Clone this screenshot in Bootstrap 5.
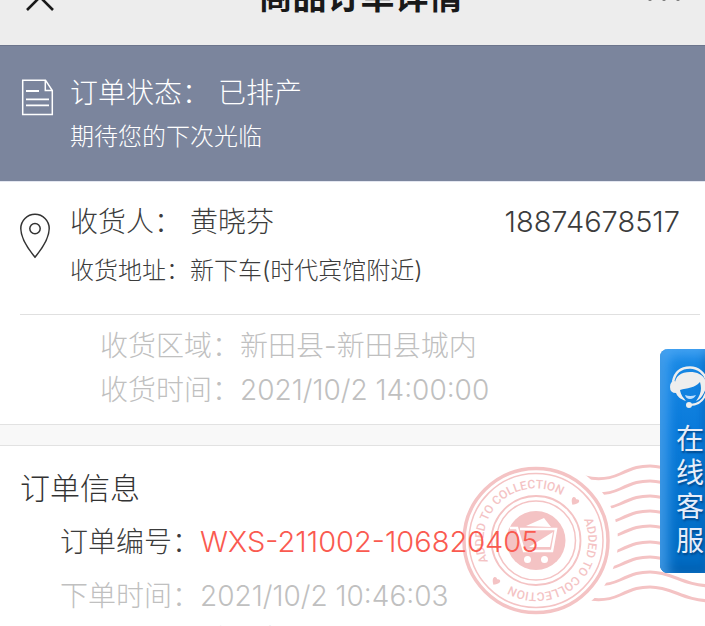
<!DOCTYPE html>
<html lang="zh-CN">
<head>
<meta charset="utf-8">
<meta name="viewport" content="width=device-width, initial-scale=1">
<title>商品订单详情</title>
<link href="https://cdn.jsdelivr.net/npm/bootstrap@5.3.0/dist/css/bootstrap.min.css" rel="stylesheet">
<style>
  body { font-family: Inter, "Noto Sans CJK SC", sans-serif; font-weight: 300; font-size: 28px; line-height: 44px; color: #3c3c3c; background: #fff; height: 100vh; overflow: hidden; }
  h1, h2 { margin: 0; line-height: 44px; }
  .topbar { background: #ededed; height: 46px; border-bottom: 1px solid #6c758c; overflow: hidden; }
  .topbar-row { margin-top: -25px; height: 44px; padding: 0 25px; }
  .topbar h1 { font-size: 34px; font-weight: 700; color: #191919; padding-left: 18px; }
  .plain-btn { border: 0; background: none; padding: 0; line-height: 0; color: #191919; }
  .status { background: #7b859d; color: #fff; padding: 25px 20px 22px; border-bottom: 1px solid #e3e6f0; }
  .icon-col { width: 50px; flex: none; line-height: 0; }
  .status .icon-col { padding: 8px 0 0 1px; }
  .receiver { padding: 18px 25px 21px 20px; }
  .receiver .icon-col { padding-top: 13px; }
  .receiver-lines { gap: 5px; }
  .fine { font-size: 24px; }
  .phone, .order-no { font-size: 29px; }
  .delivery { margin: 0 5px 0 20px; border-top: 1px solid #e0e0e0; padding: 9px 0 12px 80px; }
  .dim { color: #c0c0c0; }
  .order-no { color: #fa5a50; }
  .band { height: 22px; background: #f8f8f8; border: solid #e2e2e2; border-width: 1px 0; }
  .order { padding: 20px 20px 0; }
  .order-lines { gap: 10px; }
  .order h2 { font-size: 30px; font-weight: 300; color: #333; }
  .order-rows { padding-left: 40px; }
  .pay-line { line-height: 44px; padding-left: 140px; }
  .postmark { position: absolute; top: 14px; right: 0; z-index: 0; }
  .postmark text { font-family: Roboto, sans-serif; font-weight: 500; font-size: 12px; }
  .above { position: relative; z-index: 1; }
  .service { position: fixed; top: 349px; right: 0; z-index: 5; width: 45px; border: 0; border-radius: 8px 0 0 8px; padding: 16px 0 15px 8px; color: #e6eefa; font-weight: 400; font-size: 28px; line-height: 34px; overflow: hidden;
    background: linear-gradient(#1a8ae6, #0a7bdb 35%, #006cc4 90%); box-shadow: inset 8px 6px 12px #5bb0f8aa, inset 0 -8px 8px #0062b4; text-shadow: 1px 2px 2px #00488c; }
  .service-text { width: 28px; margin: 13px 0 0 8px; word-break: break-all; }
</style>
</head>
<body>
<header class="topbar">
  <div class="topbar-row d-flex align-items-center">
    <button class="plain-btn" type="button" aria-label="关闭"><svg width="30" height="30" viewBox="0 0 30 30" fill="none" stroke="currentColor" stroke-width="2.6"><path d="M2 2 28 28M28 2 2 28"/></svg></button>
    <h1 class="flex-fill text-center">商品订单详情</h1>
    <button class="plain-btn" type="button" aria-label="更多"><svg width="32" height="8" viewBox="0 0 32 8" fill="#777"><circle cx="2" cy="6" r="2"/><circle cx="16" cy="6" r="2"/><circle cx="30" cy="6" r="2"/></svg></button>
  </div>
</header>

<main>
  <section class="status d-flex">
    <div class="icon-col"><svg width="34" height="38" viewBox="0 0 34 38" fill="none" stroke="#fff" stroke-width="1.5"><path d="M1.7 1.2H24.5L31.3 11.5V35.5H1.7ZM24.3 1.2V11.5H31.3"/><path d="M5 12H18M5 20.3H28M5 26.4H28" stroke-width="1.8"/></svg></div>
    <div>
      <div>订单状态： 已排产</div>
      <div class="fine">期待您的下次光临</div>
    </div>
  </section>

  <section class="receiver d-flex">
    <div class="icon-col"><svg width="30" height="46" viewBox="0 0 30 46" fill="none" stroke="#333" stroke-width="1.5"><path d="M15 44.2C9 37 .8 25 .8 15.5A14.2 14.2 0 0 1 29.2 15.5C29.2 25 21 37 15 44.2Z"/><circle cx="15" cy="15.6" r="5.2"/></svg></div>
    <div class="receiver-lines flex-fill d-flex flex-column">
      <div class="d-flex justify-content-between"><span>收货人： 黄晓芬</span><span class="phone">18874678517</span></div>
      <div class="fine">收货地址：新下车(时代宾馆附近)</div>
    </div>
  </section>

  <section class="delivery dim">
    <div>收货区域：新田县-新田县城内</div>
    <div>收货时间：2021/10/2 14:00:00</div>
  </section>

  <div class="band"></div>

  <section class="order position-relative">
    <svg class="postmark" width="245" height="160" viewBox="0 0 245 160" fill="none" stroke="#f4c3c4" aria-hidden="true">
      <defs>
        <path id="arc-top" d="M28.100 101.500A52 52 0 0 1 105 37.500"/>
        <path id="arc-bottom" d="M123.900 59.500A52 52 0 0 1 47 123.500"/>
        <path id="wave" d="M125 11C137 14 148 13.500 160 8C174 1.500 180 0 190 0C213 0 222 13.500 252 14"/>
        <mask id="outside" maskUnits="userSpaceOnUse" x="0" y="0" width="245" height="160"><path d="M0 0H245V160H0Z" fill="#fff" stroke="none"/><circle cx="76" cy="80.500" r="82" fill="#000" stroke="none"/></mask>
      </defs>
      <g mask="url(#outside)" stroke-width="3">
        <use href="#wave" y="6"/><use href="#wave" y="21"/><use href="#wave" y="36"/><use href="#wave" y="51"/><use href="#wave" y="66"/><use href="#wave" y="82"/><use href="#wave" y="97"/><use href="#wave" y="112"/><use href="#wave" y="127"/>
      </g>
      <circle cx="76" cy="80.500" r="72" stroke-width="3.500"/>
      <circle cx="76" cy="80.500" r="67" stroke-width="1.500"/>
      <circle cx="76" cy="80.500" r="44.500" stroke-width="1.800"/>
      <circle cx="76" cy="80.500" r="39.500" stroke-width="1.500"/>
      <g fill="#f4c3c4" stroke="none">
        <circle cx="76" cy="80.500" r="29.500"/>
        <text><textPath href="#arc-top">ADDED TO COLLECTION</textPath></text>
        <text><textPath href="#arc-bottom">ADDED TO COLLECTION</textPath></text>
        <path transform="translate(115 41) rotate(35)" d="M0 4.500C-7-1-3-5 0-2C3-5 7-1 0 4.500Z"/>
        <path transform="translate(36 121) rotate(35)" d="M0 4.500C-7-1-3-5 0-2C3-5 7-1 0 4.500Z"/>
      </g>
      <path d="M50 68H57L64 91H92L96 69H60" stroke="#fff" stroke-width="2.500"/>
      <path d="M66 66 84 58 91 67ZM69 87 93 72 90 87ZM71 99.500a3.500 3.500 0 1 1-7 0a3.500 3.500 0 1 1 7 0ZM88 99.500a3.500 3.500 0 1 1-7 0a3.500 3.500 0 1 1 7 0Z" fill="#fff" stroke="none"/>
    </svg>
    <div class="order-lines above d-flex flex-column">
      <h2>订单信息</h2>
      <div class="order-rows">订单编号：<span class="order-no">WXS-211002-106820405</span></div>
      <div class="order-rows dim">
        <div>下单时间：2021/10/2 10:46:03</div>
        <div class="pay-line">微信支付</div>
      </div>
    </div>
  </section>
</main>

<button class="service text-start" type="button">
  <svg class="d-block" width="37" height="44" viewBox="0 0 37 44" aria-hidden="true"><path d="M5 17C7 6 14 2.500 22 2.500S37 8 39 17" fill="none" stroke="#eee" stroke-width="2.500"/><path d="M7 25C5 12 12 7 22 7S39 12 38 22C36 31 31 35 28 36C33 29 34 24 32 17C27 23 19 23 12 25C13 31 16 33 18 36C12 34 9 31 8 28Q2 28 2 22T7 16Z" fill="#eee"/><path d="M17 30Q22 32 28 30Q26 34 22 34T17 30Z" fill="#bfe0ff"/><path d="M22 40Q34 40 38 28" fill="none" stroke="#eee" stroke-width="2"/><circle cx="21" cy="40" r="3" fill="#eee"/></svg>
  <span class="service-text d-block">在线客服</span>
</button>
<script src="https://cdn.jsdelivr.net/npm/bootstrap@5.3.0/dist/js/bootstrap.bundle.min.js"></script>
</body>
</html>
